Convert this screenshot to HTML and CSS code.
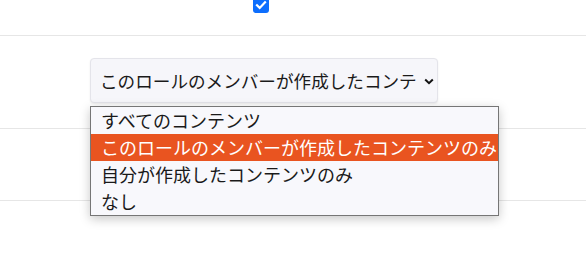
FILE: index.html
```html
<!DOCTYPE html>
<html lang="ja">
<head>
<meta charset="utf-8">
<link rel="stylesheet" href="styles.css">
</head>
<body>
<div class="table">
  <div class="row row-top">
    <span class="check">
      <svg width="16" height="16" viewBox="0 0 16 16"><path d="M4 8.2l2.7 2.7L12 5.4" fill="none" stroke="#fff" stroke-width="2.2" stroke-linecap="square"/></svg>
    </span>
  </div>
  <div class="row row-select">
    <div class="select-wrap">
      <div class="select">
        <span class="select-text">このロールのメンバーが作成したコンテンツのみ</span>
        <svg class="chev" width="10" height="7" viewBox="0 0 10 7"><path d="M1.2 1.5L5 5.2 8.8 1.5" fill="none" stroke="#111" stroke-width="2"/></svg>
      </div>
      <ul class="menu">
        <li class="opt">すべてのコンテンツ</li>
        <li class="opt sel">このロールのメンバーが作成したコンテンツのみ</li>
        <li class="opt">自分が作成したコンテンツのみ</li>
        <li class="opt">なし</li>
      </ul>
    </div>
  </div>
  <div class="row row-mid"></div>
  <div class="row row-bottom"></div>
</div>
</body>
</html>
```
FILE: styles.css
```css
html, body {
  margin: 0;
  padding: 0;
  background: #fff;
  overflow: hidden;
}
body {
  font-family: "Noto Sans CJK JP", "Noto Sans", sans-serif;
  color: #1a1a1a;
  width: 586px;
  height: 277px;
}
.table {
  display: flex;
  flex-direction: column;
}
.row {
  border-bottom: 1px solid #e6e6e6;
}
.row-top {
  height: 35px;
  display: flex;
  justify-content: flex-start;
  padding-left: 253px;
}
.check {
  display: block;
  width: 16px;
  height: 16px;
  margin-top: -3px;
  background: #0d6efd;
  border-radius: 3px;
}
.check svg { display: block; }
.row-select {
  padding-left: 90px;
  padding-top: 22px;
  box-sizing: border-box;
  height: 93px;
}
.select-wrap {
  position: relative;
  width: 348px;
}
.select {
  box-sizing: border-box;
  width: 348px;
  height: 45px;
  background: #f6f6fa;
  border: 1px solid #e4e4ea;
  border-radius: 4px;
  box-shadow: 0 1px 2px rgba(0,0,0,0.08);
  display: flex;
  align-items: center;
  padding-left: 9px;
  font-size: 17.6px;
}
.select-text {
  flex: none;
  width: 317px;
  overflow: hidden;
  white-space: nowrap;
  line-height: 24px;
  margin-top: 1px;
}
.chev {
  flex: none;
  margin-left: 7px;
  margin-top: 1px;
}
.menu {
  position: absolute;
  left: 0;
  top: 48px;
  z-index: 2;
  margin: 0;
  padding: 0;
  list-style: none;
  width: 409px;
  box-sizing: border-box;
  background: #f8f8fc;
  border: 1px solid #767676;
  box-shadow: 0 3px 10px rgba(0,0,0,0.22);
  font-size: 18px;
}
.opt {
  height: 27px;
  line-height: 27px;
  padding-left: 10px;
  white-space: nowrap;
  color: #1a1a1a;
}
.opt.sel {
  background: #e95420;
  color: #fff;
}
.row-mid {
  height: 71px;
}
.row-bottom {
  height: 0;
  border-bottom: none;
}
```
